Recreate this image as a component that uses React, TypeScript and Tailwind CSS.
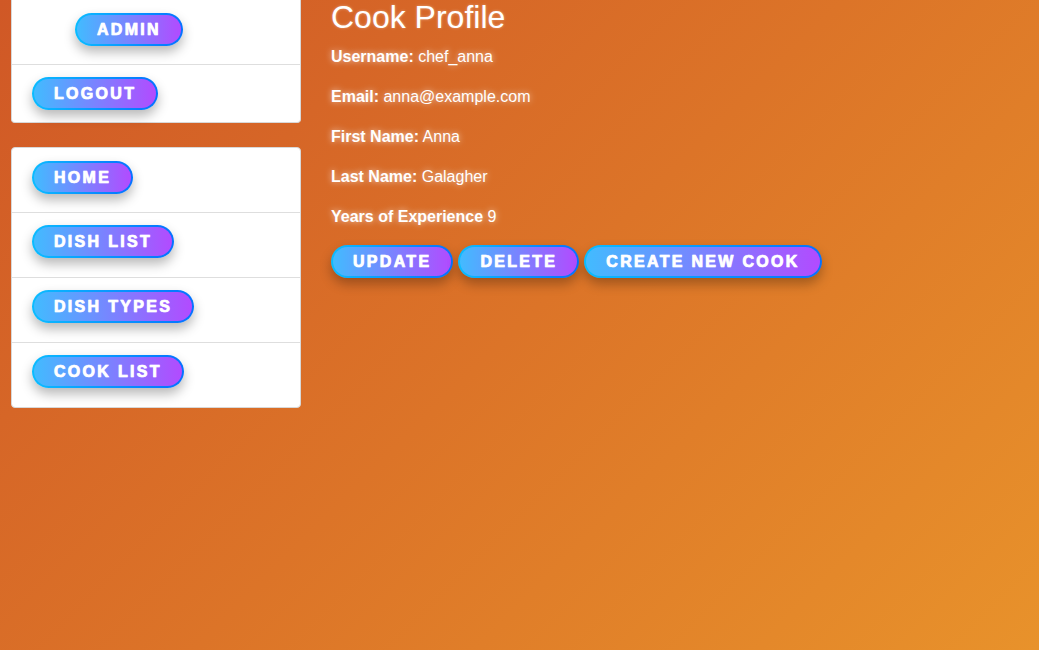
import React from 'react';

const btn =
  'inline-flex items-center h-[33px] px-5 rounded-full border-2 border-transparent text-white text-base font-bold uppercase tracking-[2.3px] leading-none ' +
  '[background:linear-gradient(90deg,#42bbff,#b24bff)_padding-box,linear-gradient(90deg,#0bbcff,#0572ff)_border-box] ' +
  'shadow-[0_6px_12px_rgba(0,0,0,0.28)] [-webkit-text-stroke:0.6px_white] [text-shadow:0_0_1px_rgba(255,255,255,0.8)]';

function PillButton({ label, className = '' }: { label: string; className?: string }) {
  return <button className={`${btn} ${className}`}>{label}</button>;
}

function SideItem({ label, first, offset, height }: { label: string; first?: boolean; offset?: boolean; height: string }) {
  return (
    <div className={`${height} px-5 ${first ? 'pt-[13px]' : 'pt-3 border-t border-[#dedede]'}`}>
      <PillButton label={label} className={offset ? 'ml-[43px]' : ''} />
    </div>
  );
}

const fields = [
  { label: 'Username:', value: 'chef_anna' },
  { label: 'Email:', value: 'anna@example.com' },
  { label: 'First Name:', value: 'Anna' },
  { label: 'Last Name:', value: 'Galagher' },
  { label: 'Years of Experience', value: '9' },
];

export default function App() {
  return (
    <div className="min-h-screen w-full bg-[linear-gradient(135deg,#d05826,#dc7428_50%,#e8922b)] font-['Liberation_Sans',Arial,sans-serif]">
      <div className="flex gap-[30px] pl-[11px]">
        <aside className="w-[290px] shrink-0 flex flex-col gap-6">
          <div className="bg-white border border-t-0 border-[#d8d8d8] rounded-b">
            <SideItem label="Admin" first offset height="h-[64px]" />
            <SideItem label="Logout" height="h-[58px]" />
          </div>
          <div className="bg-white border border-[#d8d8d8] rounded">
            <SideItem label="Home" first height="h-[64px]" />
            <SideItem label="Dish List" height="h-[65px]" />
            <SideItem label="Dish Types" height="h-[65px]" />
            <SideItem label="Cook List" height="h-[65px]" />
          </div>
        </aside>
        <main className="text-white [text-shadow:0_0_6px_rgba(255,255,255,0.7)]">
          <h1 className="text-[32px] leading-[1.1] mb-[10px] [text-shadow:0_0_3px_rgba(255,255,255,0.4)]">Cook Profile</h1>
          {fields.map((f) => (
            <p key={f.label} className="text-base leading-6 mb-4">
              <strong className="font-bold">{f.label}</strong> {f.value}
            </p>
          ))}
          <div className="flex gap-[5px]">
            <PillButton label="Update" />
            <PillButton label="Delete" />
            <PillButton label="Create new cook" />
          </div>
        </main>
      </div>
    </div>
  );
}
